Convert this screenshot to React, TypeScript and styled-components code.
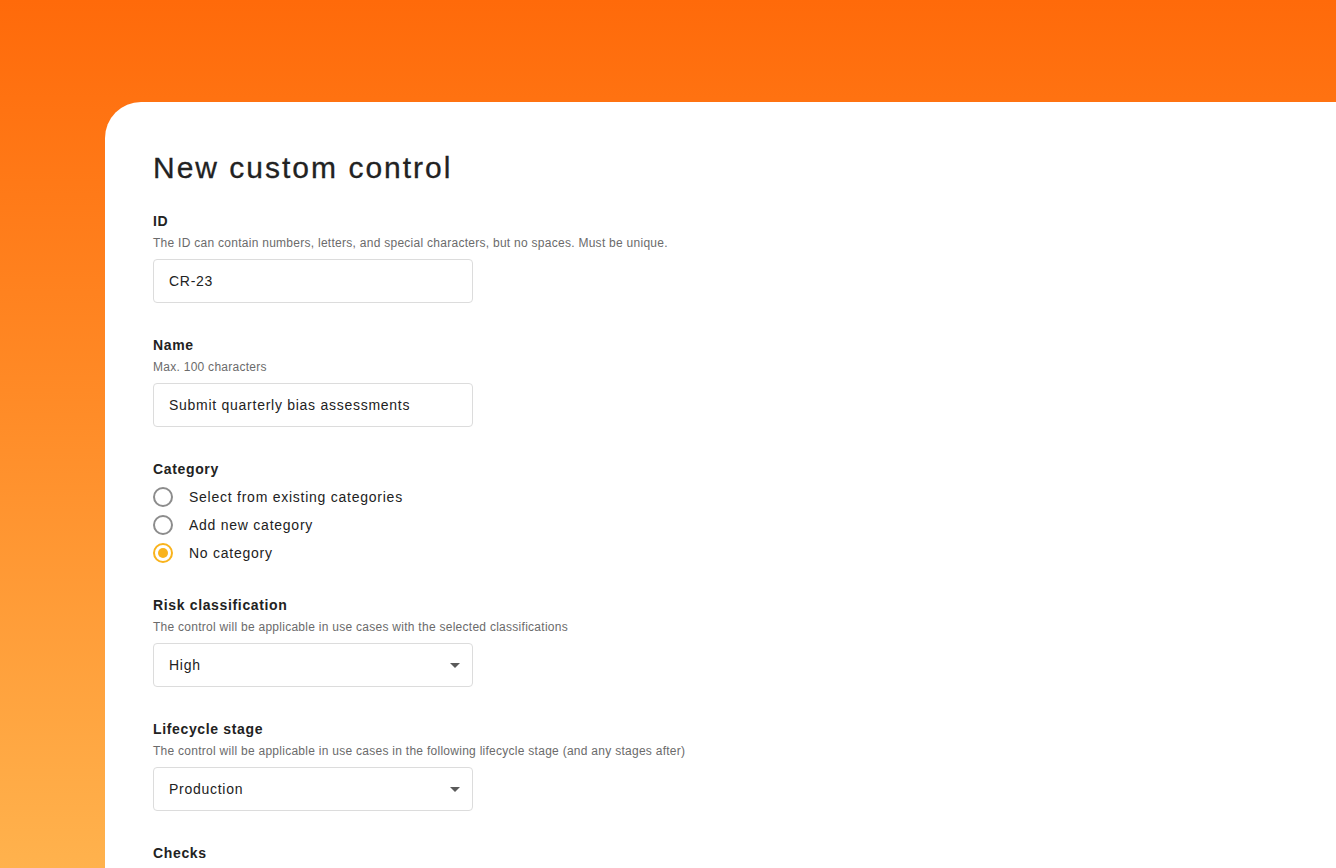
import styled, { createGlobalStyle } from "styled-components";

const GlobalStyle = createGlobalStyle`
  html, body {
    margin: 0;
    padding: 0;
  }
  body {
    font-family: "Liberation Sans", Arial, Helvetica, sans-serif;
    color: #222;
    overflow: hidden;
  }
`;

const Page = styled.div`
  height: 868px;
  padding-top: 102px;
  padding-left: 105px;
  box-sizing: border-box;
  background: linear-gradient(180deg, #ff6a0a 0%, #ff8a26 45%, #ffb24d 100%);
  overflow: hidden;
`;

const Card = styled.main`
  height: 100%;
  background: #fff;
  border-top-left-radius: 36px;
  padding: 48px 48px 0;
  box-sizing: border-box;
  display: flex;
  flex-direction: column;
`;

const Title = styled.h1`
  margin: 0 0 25px;
  font-size: 30px;
  line-height: 36px;
  font-weight: 400;
  letter-spacing: 2px;
  color: #222;
  -webkit-text-stroke: 0.3px #222;
`;

const Field = styled.section<{ $gap?: number }>`
  display: flex;
  flex-direction: column;
  margin-bottom: ${(p) => p.$gap ?? 32}px;
`;

const Label = styled.label`
  font-size: 14px;
  line-height: 20px;
  font-weight: 700;
  letter-spacing: 0.65px;
  color: #222;
`;

const Hint = styled.p`
  margin: 4px 0 8px;
  font-size: 12px;
  line-height: 16px;
  letter-spacing: 0.27px;
  color: #6b6b6b;
`;

const Input = styled.div`
  width: 320px;
  height: 44px;
  box-sizing: border-box;
  border: 1px solid #dcdcdc;
  border-radius: 4px;
  padding: 0 16px 0 15px;
  display: flex;
  align-items: center;
  justify-content: space-between;
  font-size: 14px;
  letter-spacing: 0.73px;
  color: #222;
`;

const Caret = styled.span`
  width: 0;
  height: 0;
  border-left: 5px solid transparent;
  border-right: 5px solid transparent;
  border-top: 5px solid #5a5a5a;
  margin-right: -4px;
`;

const RadioList = styled.div`
  display: flex;
  flex-direction: column;
  margin-top: 4px;
`;

const RadioRow = styled.div`
  height: 28px;
  display: flex;
  align-items: center;
  gap: 16px;
  font-size: 14px;
  letter-spacing: 0.75px;
  color: #222;
`;

const RadioDot = styled.span<{ $checked?: boolean }>`
  width: 20px;
  height: 20px;
  box-sizing: border-box;
  border-radius: 50%;
  border: 2px solid ${(p) => (p.$checked ? "#f9b31c" : "#8c8c8c")};
  display: flex;
  align-items: center;
  justify-content: center;

  &::after {
    content: "";
    width: 10px;
    height: 10px;
    border-radius: 50%;
    background: ${(p) => (p.$checked ? "#f9b31c" : "transparent")};
  }
`;

const categories = [
  { label: "Select from existing categories", checked: false },
  { label: "Add new category", checked: false },
  { label: "No category", checked: true },
];

export default function App() {
  return (
    <>
      <GlobalStyle />
      <Page>
        <Card>
          <Title>New custom control</Title>

          <Field>
            <Label>ID</Label>
            <Hint>
              The ID can contain numbers, letters, and special characters, but no spaces. Must be
              unique.
            </Hint>
            <Input>CR-23</Input>
          </Field>

          <Field>
            <Label>Name</Label>
            <Hint>Max. 100 characters</Hint>
            <Input>Submit quarterly bias assessments</Input>
          </Field>

          <Field $gap={28}>
            <Label>Category</Label>
            <RadioList>
              {categories.map((c) => (
                <RadioRow key={c.label}>
                  <RadioDot $checked={c.checked} />
                  {c.label}
                </RadioRow>
              ))}
            </RadioList>
          </Field>

          <Field>
            <Label>Risk classification</Label>
            <Hint>The control will be applicable in use cases with the selected classifications</Hint>
            <Input>
              High
              <Caret />
            </Input>
          </Field>

          <Field>
            <Label>Lifecycle stage</Label>
            <Hint>
              The control will be applicable in use cases in the following lifecycle stage (and any
              stages after)
            </Hint>
            <Input>
              Production
              <Caret />
            </Input>
          </Field>

          <Field>
            <Label>Checks</Label>
          </Field>
        </Card>
      </Page>
    </>
  );
}
